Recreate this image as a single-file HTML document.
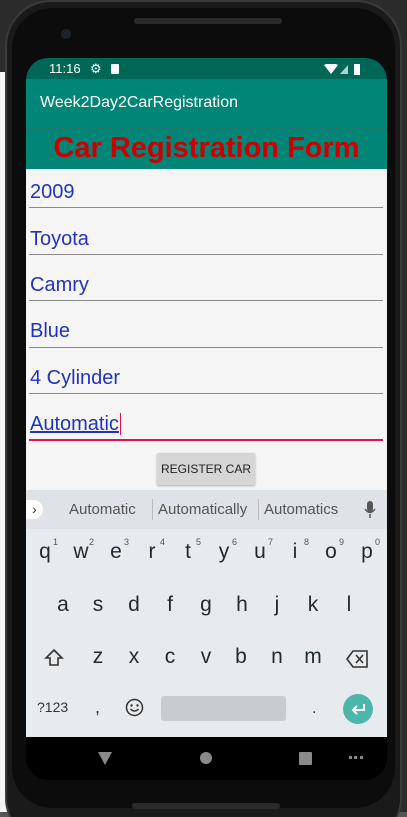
<!DOCTYPE html>
<html style="margin:0;width:407px;height:817px;overflow:hidden"><head><meta charset="utf-8"><style>
body{margin:0;width:407px;height:817px;background:#fff;position:relative;overflow:hidden;font-family:"Liberation Sans",Roboto,sans-serif}
.a{position:absolute}
.fld{position:absolute;left:30px;font-size:20px;color:#2233bb}
.ln{position:absolute;left:29px;width:354px;height:1px;background:#8a8a8a}
.k{position:absolute;width:36px;text-align:center;font-size:21px;color:#1f2a30}
.n{position:absolute;font-size:9px;color:#555}
.s{position:absolute;font-size:15px;color:#555}
</style></head><body>
<div class="a" style="left:0;top:0;width:407px;height:817px;background:#2b2b2b"></div>
<div class="a" style="left:0;top:72px;width:30px;height:745px;background:#f3f3f3"></div>
<div class="a" style="left:0;top:812px;width:407px;height:5px;background:#555"></div>
<div class="a" style="left:5px;top:0;width:393px;height:840px;background:#1a1a1a;border-radius:46px;border:2px solid #3a3a3a"></div>
<div class="a" style="left:12px;top:8px;width:383px;height:800px;background:#0c0c0c;border-radius:40px"></div>
<div class="a" style="left:134px;top:18px;width:148px;height:6px;background:#2a2a2a;border-radius:3px"></div>
<div class="a" style="left:61px;top:29px;width:10px;height:10px;background:#1e2230;border-radius:50%"></div>
<div class="a" style="left:132px;top:803px;width:148px;height:6px;background:#2a2a2a;border-radius:3px"></div>
<!-- screen -->
<div class="a" style="left:26px;top:58px;width:361px;height:722px;background:#000;border-radius:22px;overflow:hidden">
 <div class="a" style="left:0;top:0;width:361px;height:21px;background:#006655"></div>
 <div class="a" style="left:23px;top:3px;font-size:13px;color:#fff">11:16</div>
 <div class="a" style="left:64px;top:3px;font-size:13px;color:#fff">⚙</div>
 <div class="a" style="left:85px;top:6px;width:8px;height:10px;background:#fff;border-radius:1px"></div>
 <svg class="a" style="left:298px;top:6px" width="40" height="12"><path d="M0 1 Q7 -3 14 1 L7 10Z" fill="#fff"/><path d="M16 10 L24 1 V10Z" fill="#fff" opacity=".7"/><rect x="30" y="0" width="6" height="11" fill="#fff"/></svg>
 <div class="a" style="left:0;top:21px;width:361px;height:49px;background:#008577"></div>
 <div class="a" style="left:14px;top:36px;font-size:16px;color:#fff">Week2Day2CarRegistration</div>
 <div class="a" style="left:0;top:70px;width:361px;height:41px;background:#008577;border-top:1px solid #1a7a6e"></div>
 <div class="a" style="left:0;top:74px;width:361px;text-align:center;font-size:29px;font-weight:bold;color:#cc0000">Car Registration Form</div>
 <div class="a" style="left:0;top:111px;width:361px;height:322px;background:#f5f5f5"></div>
</div>
<div class="fld" style="top:181px">2009</div><div class="ln" style="top:207px"></div>
<div class="fld" style="top:228px">Toyota</div><div class="ln" style="top:254px"></div>
<div class="fld" style="top:274px">Camry</div><div class="ln" style="top:300px"></div>
<div class="fld" style="top:320px">Blue</div><div class="ln" style="top:347px"></div>
<div class="fld" style="top:367px">4 Cylinder</div><div class="ln" style="top:393px"></div>
<div class="fld" style="top:413px;text-decoration:underline">Automatic<span style="border-left:1.5px solid #e0105a;margin-left:1px"></span></div>
<div class="a" style="left:29px;top:439px;width:354px;height:2px;background:#e0105a"></div>
<div class="a" style="left:157px;top:453px;width:98px;height:32px;background:#d6d6d6;border-radius:2px;box-shadow:0 1px 2px #aaa;font-size:12px;text-align:center;line-height:32px;color:#222">REGISTER CAR</div>
<!-- keyboard -->
<div class="a" style="left:26px;top:490px;width:361px;height:39px;background:#dfe3e7"></div>
<div class="a" style="left:26px;top:529px;width:361px;height:208px;background:#e8ebee"></div>
<div class="a" style="left:26px;top:500px;width:17px;height:19px;background:#fff;border-radius:0 10px 10px 0;font-size:14px;line-height:19px;text-align:center;color:#333">›</div>
<div class="s" style="left:69px;top:501px">Automatic</div>
<div class="a" style="left:152px;top:499px;width:1px;height:21px;background:#bbb"></div>
<div class="s" style="left:158px;top:501px">Automatically</div>
<div class="a" style="left:258px;top:499px;width:1px;height:21px;background:#bbb"></div>
<div class="s" style="left:264px;top:501px">Automatics</div>
<svg class="a" style="left:364px;top:501px" width="12" height="18"><rect x="3" y="0" width="6" height="11" rx="3" fill="#555"/><path d="M1 8 Q6 15 11 8 M6 13 V17" stroke="#555" stroke-width="1.5" fill="none"/></svg>
<div class="k" style="left:27px;top:540px">q</div><div class="n" style="left:53px;top:537px">1</div>
<div class="k" style="left:63px;top:540px">w</div><div class="n" style="left:89px;top:537px">2</div>
<div class="k" style="left:98px;top:540px">e</div><div class="n" style="left:124px;top:537px">3</div>
<div class="k" style="left:134px;top:540px">r</div><div class="n" style="left:160px;top:537px">4</div>
<div class="k" style="left:170px;top:540px">t</div><div class="n" style="left:196px;top:537px">5</div>
<div class="k" style="left:206px;top:540px">y</div><div class="n" style="left:232px;top:537px">6</div>
<div class="k" style="left:242px;top:540px">u</div><div class="n" style="left:268px;top:537px">7</div>
<div class="k" style="left:277px;top:540px">i</div><div class="n" style="left:304px;top:537px">8</div>
<div class="k" style="left:313px;top:540px">o</div><div class="n" style="left:339px;top:537px">9</div>
<div class="k" style="left:349px;top:540px">p</div><div class="n" style="left:375px;top:537px">0</div>
<div class="k" style="left:45px;top:593px">a</div><div class="k" style="left:80px;top:593px">s</div><div class="k" style="left:116px;top:593px">d</div><div class="k" style="left:152px;top:593px">f</div><div class="k" style="left:188px;top:593px">g</div><div class="k" style="left:224px;top:593px">h</div><div class="k" style="left:259px;top:593px">j</div><div class="k" style="left:295px;top:593px">k</div><div class="k" style="left:331px;top:593px">l</div>
<svg class="a" style="left:44px;top:648px" width="20" height="20"><path d="M10 2 L18 10 H14 V17 H6 V10 H2Z" fill="none" stroke="#333" stroke-width="1.6"/></svg>
<div class="k" style="left:80px;top:645px">z</div><div class="k" style="left:116px;top:645px">x</div><div class="k" style="left:152px;top:645px">c</div><div class="k" style="left:188px;top:645px">v</div><div class="k" style="left:223px;top:645px">b</div><div class="k" style="left:259px;top:645px">n</div><div class="k" style="left:295px;top:645px">m</div>
<svg class="a" style="left:346px;top:650px" width="23" height="18"><path d="M7 1 H21 V17 H7 L1 9Z" fill="none" stroke="#333" stroke-width="1.6"/><path d="M10 5 L17 13 M17 5 L10 13" stroke="#333" stroke-width="1.6"/></svg>
<div class="a" style="left:37px;top:699px;font-size:14px;color:#333">?123</div>
<div class="a" style="left:95px;top:697px;font-size:18px;color:#333">,</div>
<svg class="a" style="left:125px;top:698px" width="19" height="19"><circle cx="9.5" cy="9.5" r="8" fill="none" stroke="#333" stroke-width="1.5"/><circle cx="6.5" cy="7.5" r="1.2" fill="#333"/><circle cx="12.5" cy="7.5" r="1.2" fill="#333"/><path d="M5.5 11 Q9.5 15 13.5 11" fill="none" stroke="#333" stroke-width="1.5"/></svg>
<div class="a" style="left:161px;top:696px;width:125px;height:25px;background:#c8ccd0;border-radius:3px"></div>
<div class="a" style="left:312px;top:700px;font-size:16px;color:#333">.</div>
<div class="a" style="left:343px;top:694px;width:30px;height:30px;border-radius:50%;background:#4db6ac"></div>
<svg class="a" style="left:349px;top:700px" width="18" height="18"><path d="M15 4 V10 H4 M8 6 L4 10 L8 14" fill="none" stroke="#fff" stroke-width="2"/></svg>
<svg class="a" style="left:98px;top:752px" width="16" height="14"><path d="M0 0 H14 L7 13Z" fill="#8a8a8a"/></svg>
<div class="a" style="left:200px;top:752px;width:12px;height:12px;border-radius:50%;background:#8a8a8a"></div>
<div class="a" style="left:299px;top:752px;width:13px;height:13px;border-radius:1px;background:#8a8a8a"></div>
<div class="a" style="left:349px;top:756px;width:14px;height:6px;border-top:3px dotted #888"></div>
</body></html>
